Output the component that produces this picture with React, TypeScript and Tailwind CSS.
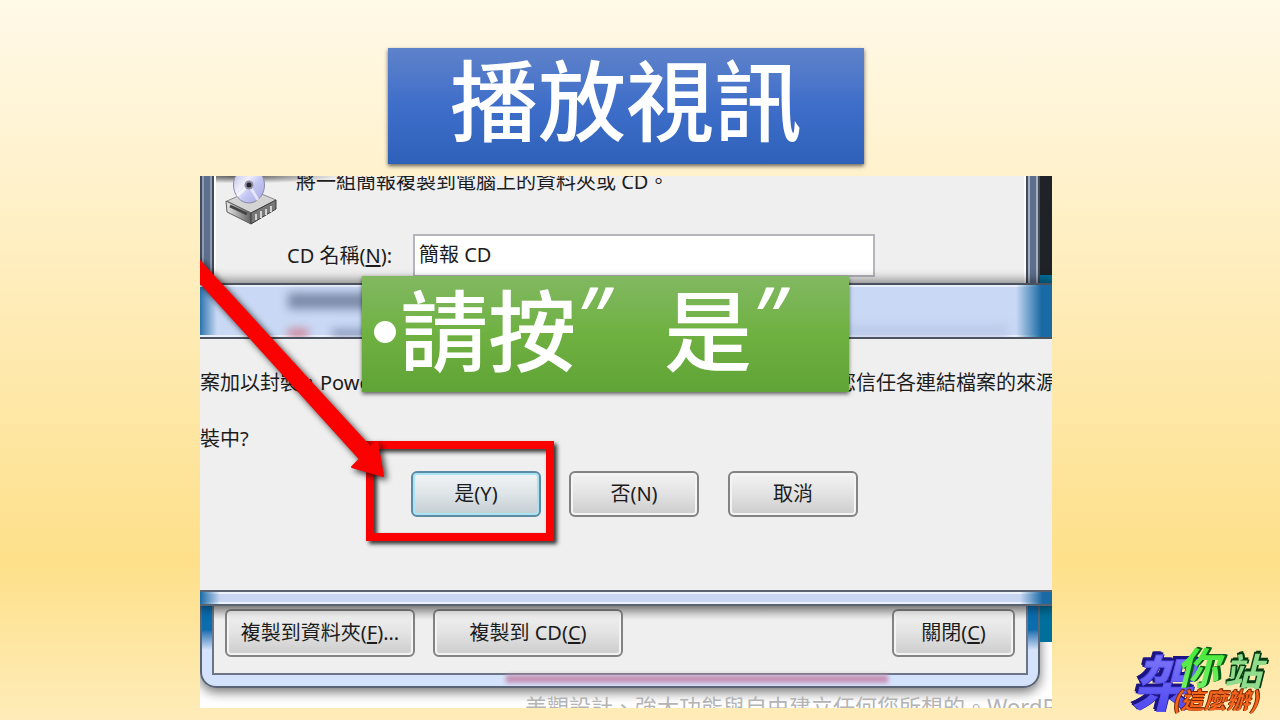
import type { ReactNode } from "react";

type DialogButtonProps = {
  children: ReactNode;
  className?: string;
  focused?: boolean;
};

function DialogButton({ children, className = "", focused = false }: DialogButtonProps) {
  const tone = focused
    ? "border-[#5c8ba3] bg-linear-to-b from-[#f1f4f5] from-0% via-[#dfe5e8] via-48% to-[#c3cdd3] shadow-[inset_0_0_0_2px_#a9e4f5]"
    : "border-[#838383] bg-linear-to-b from-[#f3f3f3] from-0% via-[#e3e3e3] via-48% to-[#cccccc] shadow-[inset_0_0_0_2px_#f4f4f4]";
  return (
    <button
      type="button"
      className={`shrink-0 rounded-md border-2 text-center text-xl leading-5 whitespace-nowrap text-[#1c1c1c] ${tone} ${className}`}
    >
      {children}
    </button>
  );
}

function Key({ children }: { children: ReactNode }) {
  return <span className="underline decoration-2 underline-offset-2">{children}</span>;
}

function WideQuote() {
  return <span className="w-22 shrink-0 pb-5 font-['Open_Sans',sans-serif] font-medium italic">”</span>;
}

function DiscDriveIcon() {
  return (
    <svg viewBox="0 0 56 50" className="h-[50px] w-14 shrink-0" aria-hidden="true">
      <defs>
        <linearGradient id="disc" x1="0" y1="0" x2="1" y2="1">
          <stop offset="0" stopColor="#b4b4e4" />
          <stop offset="0.4" stopColor="#eeeefb" />
          <stop offset="0.6" stopColor="#c4c6f3" />
          <stop offset="1" stopColor="#a5a8e2" />
        </linearGradient>
        <linearGradient id="drive" x1="0" y1="0" x2="1" y2="0">
          <stop offset="0" stopColor="#e8e8e8" />
          <stop offset="0.5" stopColor="#a5a5a5" />
          <stop offset="1" stopColor="#616161" />
        </linearGradient>
      </defs>
      <path d="M3 25 28 14l24 10-25 13Z" fill="#d4d4d4" stroke="#8a8a8a" />
      <path d="M2 25 27 37v11L3 36Z" fill="url(#drive)" stroke="#5e5e5e" />
      <path d="M27 37 52 24v9L27 48Z" fill="#777" stroke="#3c3c3c" />
      <path d="M32 38v6M37 35v7M42 33v6M47 30v6" stroke="#d2d2d2" strokeWidth="2" />
      <path d="M6 30l17 8" stroke="#444" strokeWidth="3" />
      <ellipse cx="25" cy="9" rx="15.5" ry="18" fill="url(#disc)" stroke="#8a8aa5" />
      <path d="M25 9 13 20M25 9l9 15" stroke="#fff" strokeWidth="3" opacity="0.6" />
      <circle cx="25" cy="9" r="4.5" fill="#8f8fa2" />
      <circle cx="25" cy="9" r="2.5" fill="#25252c" />
    </svg>
  );
}

function PackageWindowTop() {
  return (
    <div className="flex h-[107px] bg-[#1f2327]">
      <div className="w-[14px] shrink-0 border-x-2 border-[#414b5a] bg-[#5d6f8d] shadow-[inset_2px_0_0_#8d9cb4,inset_-2px_0_0_#8d9cb4]" />
      <div className="min-w-0 flex-1 border-x-2 border-white bg-[#efefef]">
        <div className="flex h-[58px] gap-4 overflow-hidden bg-radial-[at_3%_0%] from-[#555] from-0% to-[#efefef] to-9% pl-2">
          <DiscDriveIcon />
          <p className="-mt-1 text-xl leading-5 whitespace-nowrap">將一組簡報複製到電腦上的資料夾或 CD。</p>
        </div>
        <div className="flex items-center pl-[71px]">
          <label htmlFor="cd-name" className="w-[126px] shrink-0 text-xl leading-7 whitespace-nowrap">
            CD 名稱(<Key>N</Key>):
          </label>
          <input
            id="cd-name"
            type="text"
            defaultValue="簡報 CD"
            className="h-[43px] w-[462px] min-w-0 border-2 border-[#b4b6bc] bg-white px-1 pb-1 text-xl outline-none"
          />
        </div>
      </div>
      <div className="w-[14px] shrink-0 border-x-2 border-[#414b5a] bg-[#5d6f8d] shadow-[inset_2px_0_0_#a5b0c2,inset_-2px_0_0_#a5b0c2]" />
      <div className="flex w-3 shrink-0 flex-col justify-end">
        <div className="h-2 bg-[#00729f]" />
      </div>
    </div>
  );
}

function ConfirmDialog() {
  return (
    <div className="relative shadow-[0_0_10px_3px_rgba(0,0,0,0.45)]">
      <div className="flex h-14 items-end overflow-hidden border-y-2 border-[#4b5360] bg-linear-to-r from-[#2574ae] from-0% via-[#c9d8f4] via-2% to-[#c9d8f4] shadow-[inset_0_2px_0_#e8effb,inset_0_-2px_0_#e8effb]">
        <div className="mb-7 ml-[88px] h-4 w-28 bg-[#5c6b8a] opacity-70 blur-[5px]" />
        <div className="-ml-28 h-2 w-5 bg-[#cf7f92] blur-xs" />
        <div className="ml-6 h-2 w-32 bg-[#7c8bb0] opacity-80 blur-xs" />
        <div className="ml-auto h-3 w-48 bg-[#bccae9] blur-xs" />
        <div className="ml-2 h-full w-9 shrink-0 bg-linear-to-r from-transparent to-[#1a6ba5] to-70%" />
      </div>
      <div className="bg-[#efefef] pt-[30px] pb-[73px]">
        <p className="flex h-7 justify-between overflow-hidden text-xl leading-7 whitespace-nowrap">
          <span>案加以封裝，PowerPoint</span>
          <span className="-mr-1">您信任各連結檔案的來源</span>
        </p>
        <p className="mt-7 h-7 text-xl leading-7">裝中?</p>
        <div className="mt-[18px] flex gap-7 pl-[211px]">
          <div className="relative">
            <DialogButton focused className="h-[46px] w-[130px]">是(Y)</DialogButton>
            <div className="pointer-events-none absolute -top-[30px] -right-[13px] -bottom-[24px] -left-[45px] border-8 border-[#fb0000] shadow-[3px_3px_4px_#333,inset_3px_3px_4px_#333]" />
          </div>
          <DialogButton className="h-[46px] w-[130px]">否(N)</DialogButton>
          <DialogButton className="ml-px h-[46px] w-[130px]">取消</DialogButton>
        </div>
      </div>
      <div className="flex h-4 justify-between border-y-2 border-[#5b6371] bg-[#c8d6f2] shadow-[inset_0_2px_0_#eaf1fc,inset_0_-2px_0_#eaf1fc]">
        <div className="w-5 bg-linear-to-r from-[#1a6ba5] to-transparent" />
        <div className="w-8 bg-linear-to-r from-transparent to-[#1a6ba5] to-70%" />
      </div>
    </div>
  );
}

function PackageWindowBottom() {
  return (
    <div className="flex flex-col bg-white">
      <div className="flex h-[82px]">
        <div className="min-w-0 flex-1 rounded-b-2xl border-2 border-t-0 border-[#596475] bg-linear-to-b from-[#0b6dae] from-30% to-[#d5e2fb] to-55% px-[10px] pb-3 shadow-[0_4px_12px_rgba(0,0,0,0.55)]">
          <div className="flex h-[69px] items-start gap-[18px] border-2 border-t-0 border-[#6c7585] bg-linear-to-b from-[#bdbdbd] to-[#efefef] to-20% px-[11px] pt-[3px]">
            <DialogButton className="h-12 w-[190px]">
              複製到資料夾(<Key>F</Key>)...
            </DialogButton>
            <DialogButton className="h-12 w-[190px]">
              複製到 CD(<Key>C</Key>)
            </DialogButton>
            <DialogButton className="ml-auto h-12 w-[123px]">
              關閉(<Key>C</Key>)
            </DialogButton>
          </div>
          <div className="mr-[140px] ml-auto h-2 w-[382px] bg-[#c490b5] blur-[2px]" />
        </div>
        <div className="w-3 shrink-0">
          <div className="h-9 bg-[#006f9c]" />
        </div>
      </div>
      <p className="relative h-5 overflow-hidden pt-1 pl-[325px] text-[22px] leading-7 whitespace-nowrap text-[#b4b4b4]">
        美觀設計、強大功能與自由建立任何您所想的。WordPress
      </p>
    </div>
  );
}

function Arrow() {
  return (
    <svg viewBox="0 0 852 532" className="pointer-events-none absolute top-0 left-0 h-[532px] w-[852px]" aria-hidden="true">
      <path
        d="M-3 82 170 271 177 266 183 300 152 291 160 283-3 103Z"
        fill="#fb0000"
        stroke="#fb0000"
        strokeWidth="2"
        strokeLinejoin="round"
        className="drop-shadow-[3px_3px_3px_rgba(0,0,0,0.75)]"
      />
    </svg>
  );
}

function SiteLogo() {
  return (
    <svg viewBox="0 0 140 80" className="absolute right-[10px] bottom-0 h-20 w-[140px]" role="img" aria-label="架你站(這麼辦)">
      <defs>
        <linearGradient id="logo-blue" x1="0" y1="0" x2="0" y2="1">
          <stop offset="0" stopColor="#8a84fa" />
          <stop offset="1" stopColor="#4640f0" />
        </linearGradient>
        <linearGradient id="logo-green" x1="0" y1="0" x2="0" y2="1">
          <stop offset="0" stopColor="#35e62a" />
          <stop offset="1" stopColor="#7df06c" />
        </linearGradient>
      </defs>
      <g fontFamily="'Noto Sans CJK TC', sans-serif" fontWeight="700" fontStyle="italic">
        <text
          x="2" y="66" fontSize="60" fill="url(#logo-blue)" stroke="#5a54f0" strokeWidth="1"
          className="[filter:drop-shadow(-2px_-1px_0_#1b1484)_drop-shadow(-1px_-2px_0_#1b1484)_drop-shadow(1px_0_0_#2a22a8)]"
        >
          架
        </text>
        <text
          x="46" y="44" fontSize="43" fill="url(#logo-green)"
          className="[filter:drop-shadow(2px_-1px_0_#0a5d18)_drop-shadow(1px_0_0_#0a5d18)]"
        >
          你
        </text>
        <text
          x="94" y="46" fontSize="38" fill="#8fdc8c"
          className="[filter:drop-shadow(-1px_-2px_0_#063c12)_drop-shadow(2px_-1px_0_#063c12)]"
        >
          站
        </text>
        <text
          x="42" y="69" fontSize="23" fill="#f4641b"
          className="[filter:drop-shadow(1px_-1px_0_#7a2500)_drop-shadow(-1px_0_0_#7a2500)]"
        >
          (這麼辦)
        </text>
      </g>
    </svg>
  );
}

export default function App() {
  return (
    <main className="relative flex min-h-screen flex-col items-center overflow-hidden bg-linear-to-b from-[#fff9e8] from-0% via-[#fee08a] via-78% to-[#feecb8] pt-12 pr-7 pb-3 font-['Noto_Sans','Noto_Sans_CJK_TC',sans-serif] text-[#1c1c1c]">
      <h1 className="flex h-[116px] w-full max-w-[476px] items-center justify-center bg-linear-to-b from-[#5f82ca] via-[#3e6ec9] to-[#2e61ba] pb-5 font-['Noto_Sans_CJK_TC',sans-serif] text-[88px] leading-none font-medium whitespace-nowrap text-white shadow-[0_2px_4px_rgba(0,0,0,0.6)]">
        播放視訊
      </h1>
      <section className="relative mt-3 w-full max-w-[852px] overflow-hidden">
        <PackageWindowTop />
        <ConfirmDialog />
        <PackageWindowBottom />
        <Arrow />
        <ul className="absolute top-[100px] left-[162px] w-[487px] bg-linear-to-b from-[#81b861] via-[#6fb141] to-[#60a336] shadow-[0_2px_4px_rgba(0,0,0,0.6)]">
          <li className="flex h-[116px] items-center pb-4 pl-3 font-['Noto_Sans_CJK_TC',sans-serif] text-[88px] leading-none font-medium whitespace-nowrap text-white">
            <span className="mt-3 mr-1 size-[22px] shrink-0 rounded-full bg-white" />
            <span>請按</span>
            <WideQuote />
            <span>是</span>
            <WideQuote />
          </li>
        </ul>
      </section>
      <SiteLogo />
    </main>
  );
}
